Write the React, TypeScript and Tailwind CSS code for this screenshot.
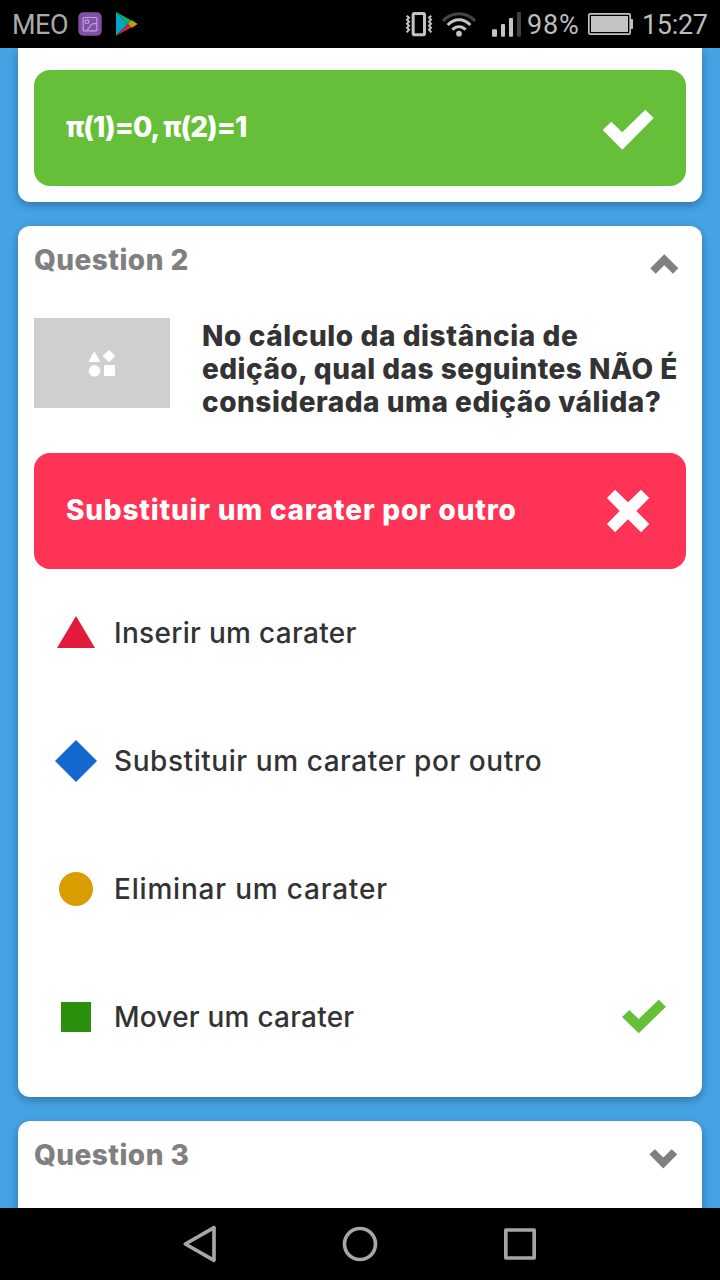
import React from 'react';

const CHECK = '0.7,24 9.3,15.7 20.3,26.3 43.3,3.7 51.7,12 20.3,43.7';
const CROSS =
  '13,0.7 26,13.3 39,0.7 47.3,9 34.3,22 47.3,35 39,43.3 26,30.3 13,43.3 5,35 17.7,22 5,9';

function StatusBar() {
  return (
    <header className="flex h-12 shrink-0 items-center bg-black font-['Roboto',sans-serif] text-[27px] leading-[48px] text-[#bdbdbd]">
      <span className="w-[66px] pt-0.5 pl-3 tracking-[-0.5px] text-[#aaaaaa]">MEO</span>
      <svg className="ml-[11px] h-12 w-[26px]" viewBox="231 0 78 144">
        <rect x="235" y="37" width="70" height="70" rx="14" fill="#8250ab" />
        <g fill="none" stroke="#c1a6d4" strokeWidth="3.500">
          <rect x="249.500" y="52.500" width="41" height="40" rx="3" />
          <circle cx="261" cy="65" r="5.500" />
          <path d="M262 92C264 82 269 84 272 76C276 69 281 71 290 71" />
        </g>
      </svg>
      <svg className="ml-3 h-12 w-[23px]" viewBox="345 0 69 144">
        <path d="M348 36V107L384 72Z" fill="#00a3c4" />
        <path d="M348 36L396 62L384 73Z" fill="#0fae62" />
        <path d="M348 107L396 82L384 72Z" fill="#c12a3c" />
        <path d="M396 61L412 71V73L396 83L384 72Z" fill="#c99a08" />
      </svg>
      <svg className="ml-[267px] h-12 w-[30px]" viewBox="45 0 90 144" fill="none" stroke="#c4c4c4">
        <rect x="69.500" y="40.500" width="34" height="64" rx="4" strokeWidth="9" />
        <path
          d="M50 47L57 53L51 59L57 65L51 71L57 77L51 83L57 89L50 97M124 47L117 53L123 59L117 65L123 71L117 77L123 83L117 89L124 97"
          strokeWidth="6"
        />
      </svg>
      <svg className="ml-1.5 h-12 w-9" viewBox="153 0 108 144" fill="none" strokeWidth="9">
        <path d="M159 63C184 34 230 34 255 63" stroke="#454545" />
        <path d="M173 75C193 54 221 54 241 75M187 89C199 77 215 77 227 89" stroke="#c4c4c4" />
        <circle cx="207" cy="101" r="8.500" fill="#c4c4c4" />
      </svg>
      <svg className="ml-[13px] h-12 w-8" viewBox="300 0 96 144" fill="#c4c4c4">
        <rect x="306" y="88" width="15" height="22" rx="3" />
        <rect x="333" y="72" width="12" height="38" rx="3" />
        <rect x="357" y="54" width="12" height="56" rx="3" />
        <rect x="381" y="36" width="12" height="74" rx="3" fill="#404040" />
      </svg>
      <span className="ml-[5px] w-[60px] pt-0.5 tracking-[0.8px]">98%</span>
      <svg className="h-12 w-[47px]" viewBox="591 0 141 144">
        <rect x="596.500" y="41.500" width="124" height="61" rx="4" fill="none" stroke="#c4c4c4" strokeWidth="5" />
        <rect x="603" y="48" width="111" height="48" fill="#c4c4c4" />
        <path d="M722 57H726Q729 57 729 60V84Q729 87 726 87H722Z" fill="#c4c4c4" />
      </svg>
      <span className="ml-2 pt-0.5 tracking-[-0.3px]">15:27</span>
    </header>
  );
}

function Banner({ color, points, children }: { color: string; points: string; children: React.ReactNode }) {
  return (
    <div className={`flex h-[116px] items-center justify-between rounded-2xl px-8 text-white ${color}`}>
      {children}
      <svg className="h-11 w-[52px]" viewBox="0 0 52 44" fill="currentColor">
        <polygon points={points} />
      </svg>
    </div>
  );
}

function QuestionHeader({ title, open }: { title: string; open?: boolean }) {
  return (
    <div className="flex h-[68px] items-center justify-between text-[#808080]">
      <h2 className="text-[28px] font-extrabold tracking-[0.45px]">{title}</h2>
      {open ? (
        <svg className="mt-2 mr-[7px] h-5 w-[29px]" viewBox="0 0 29 20" fill="currentColor">
          <polygon points="0.3,14.3 14.3,0.3 28.3,14.3 23,19.7 14.3,11.2 5.7,19.7" />
        </svg>
      ) : (
        <svg className="mt-2 mr-2 h-5 w-[29px]" viewBox="0 0 29 20" fill="currentColor">
          <polygon points="0.3,5.3 6,0.2 14.3,8.4 22.7,0.2 28.3,5.3 14.3,19.6" />
        </svg>
      )}
    </div>
  );
}

function Option({ shape, label, tracking, correct }: { shape: React.ReactNode; label: string; tracking: string; correct?: boolean }) {
  return (
    <li className="flex h-32 items-center pr-5 pl-5">
      <svg className="h-11 w-11 shrink-0" viewBox="0 0 44 44">
        {shape}
      </svg>
      <span className={`ml-4 flex-1 text-[28px] font-medium whitespace-nowrap text-[#333333] ${tracking}`}>{label}</span>
      {correct && (
        <svg className="h-[34px] w-11" viewBox="0 0 44 34" fill="#66bf39">
          <polygon points="0,17 7.3,10 16.7,19 36.7,-0.3 44,6.7 16.7,33.3" />
        </svg>
      )}
    </li>
  );
}

const CARD = 'shrink-0 bg-white px-4 shadow-[0_3px_10px_rgba(0,0,0,0.3)]';

export default function App() {
  return (
    <div className="flex h-[1280px] w-[720px] flex-col overflow-hidden bg-[#45a3e5] font-['Inter',sans-serif]">
      <StatusBar />
      <main className="flex min-h-0 flex-1 flex-col gap-6 overflow-hidden px-[18px]">
        <section className={`rounded-b-xl pt-[22px] pb-4 ${CARD}`}>
          <Banner color="bg-[#66bf39]" points={CHECK}>
            <p className="pb-0.5 text-[28px] font-extrabold tracking-[-1px] whitespace-nowrap">π(1)=0, π(2)=1</p>
          </Banner>
        </section>

        <section className={`rounded-xl pb-4 ${CARD}`}>
          <QuestionHeader title="Question 2" open />
          <div className="mt-6 flex h-[135px] gap-8">
            <div className="flex h-[90px] w-[136px] shrink-0 items-center justify-center bg-[#cfcfcf]">
              <svg className="h-[30px] w-[30px]" viewBox="0 0 30 30" fill="white">
                <polygon points="7.3,3 13.3,14 1.3,14" />
                <polygon points="22,1.700 28.3,8 22,14.3 15.700,8" />
                <circle cx="7.500" cy="22.800" r="5.800" />
                <rect x="17" y="17" width="11" height="11" />
              </svg>
            </div>
            <p className="pt-0.5 text-[28px] leading-[33px] font-extrabold whitespace-nowrap text-[#333333]">
              <span className="block tracking-[0.58px]">No cálculo da distância de</span>
              <span className="block tracking-[0.46px]">edição, qual das seguintes NÃO É</span>
              <span className="block tracking-[0.51px]">considerada uma edição válida?</span>
            </p>
          </div>
          <Banner color="bg-[#ff3355]" points={CROSS}>
            <p className="pb-0.5 text-[28px] font-extrabold tracking-[0.78px] whitespace-nowrap">Substituir um carater por outro</p>
          </Banner>
          <ul>
            <Option shape={<polygon points="22,5 41,37 3,37" fill="#e21b3c" />} label="Inserir um carater" tracking="tracking-[0.3px]" />
            <Option shape={<polygon points="22,1 43,22 22,43 1,22" fill="#1368ce" />} label="Substituir um carater por outro" tracking="tracking-[0.56px]" />
            <Option shape={<circle cx="22" cy="22" r="17" fill="#d89e00" />} label="Eliminar um carater" tracking="tracking-[0.8px]" />
            <Option shape={<rect x="7" y="7" width="30" height="30" fill="#298f0d" />} label="Mover um carater" tracking="tracking-[0.22px]" correct />
          </ul>
        </section>

        <section className={`h-[200px] rounded-t-xl ${CARD}`}>
          <QuestionHeader title="Question 3" />
        </section>
      </main>
      <nav className="flex h-[72px] shrink-0 bg-black pl-[182px]">
        <svg className="h-[72px] w-[35px]" viewBox="66 24 105 216" fill="none" stroke="#a6a6a6" strokeWidth="11" strokeLinejoin="round">
          <path d="M162 83V181L76 132Z" />
        </svg>
        <svg className="ml-[125px] h-[72px] w-9" viewBox="546 24 108 216" fill="none" stroke="#a6a6a6" strokeWidth="11">
          <circle cx="600" cy="132" r="46.500" />
        </svg>
        <svg className="ml-[125px] h-[72px] w-[34px]" viewBox="1029 24 102 216" fill="none" stroke="#a6a6a6" strokeWidth="11" strokeLinejoin="round">
          <rect x="1037.500" y="90" width="85" height="84" />
        </svg>
      </nav>
    </div>
  );
}
